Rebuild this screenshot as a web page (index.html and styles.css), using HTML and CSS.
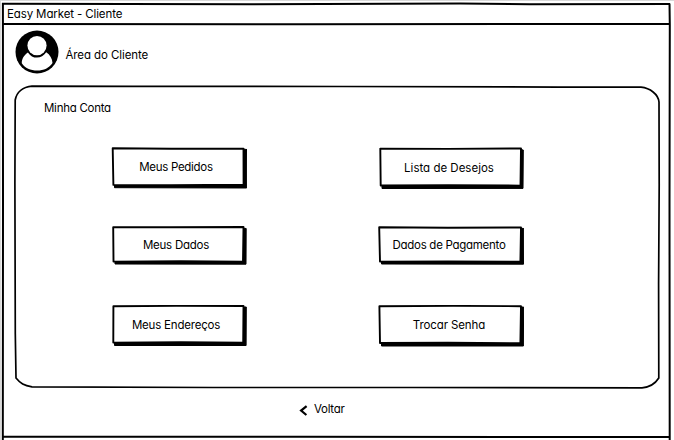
FILE: index.html
```html
<!DOCTYPE html>
<html lang="pt-BR">
<head>
<meta charset="utf-8">
<title>Easy Market - Cliente</title>
<link rel="stylesheet" href="styles.css">
</head>
<body>
<main class="window">
  <svg class="frame" viewBox="0 0 674 440" aria-hidden="true">
    <path class="edge" d="M0 .5H674M.5 0V440"/>
    <path class="line" d="M2 3.8L250 4.2L460 3.5L530 4.2L670 3.9M3 24L300 24.2L670 24"/>
    <path class="line" d="M2.9 3L3 200L2.8 440M669.5 3.5L669.8 25L669.5 200L669.7 440"/>
    <path class="line" d="M3 436.8L300 436.7L670 437.1"/>
  </svg>
  <header class="titlebar"><span class="t-title">Easy Market - Cliente</span></header>
  <div class="profile">
    <svg class="avatar" viewBox="0 0 44 44" aria-hidden="true">
      <circle cx="22" cy="22" r="21.5"/>
      <path class="white" d="M12.9 22.4C9 25 6.6 29 6.8 33.3C10 38.3 15.5 40.6 22.2 40.6C28.8 40.6 34.2 38.2 37.5 33.1C37.3 28.7 35 24.7 31.2 22.3C28.8 25.8 25.6 27.6 22 27.6C18.3 27.6 15.3 25.9 12.9 22.4Z"/>
      <circle class="white" cx="22" cy="15.6" r="9.6"/>
    </svg>
    <h1 class="t-area">Área do Cliente</h1>
  </div>
  <section class="panel">
    <svg class="outline" viewBox="0 0 648 306" aria-hidden="true">
      <path d="M19 2.1L120 2.4L330 2.5L545 3.1L628 3.2C637 4.2 645.2 10 646 18L646.2 100L645.6 200L645.8 294C642 300 637 303.2 629 303.8L400 303.5L200 303.5L19 302.8C11 301.6 7.5 299.5 3 294L2.3 250L1.9 100L2.2 16C3.6 8 10 2.9 19 2.1Z"/>
    </svg>
    <h2 class="t-conta">Minha Conta</h2>
    <nav class="menu">
      <a class="button" href="#">
        <svg viewBox="0 0 136 42" aria-hidden="true"><path class="shade" d="M130 2L136 2.5L135.6 41L3.5 40.7V36H130Z"/><path class="box" d="M1.7 1.2L60 1.8L132.5 1.6L132.6 37.6L60 38.2L2.4 37.9Z"/></svg>
        <span class="t-pedidos">Meus Pedidos</span></a>
      <a class="button wide" href="#">
        <svg viewBox="0 0 146 42" aria-hidden="true"><path class="shade" d="M140 2L145.3 3L145 41.4L4 41.5V36H140Z"/><path class="box" d="M2.3 1.6L70 1.9L143 1.5L142.5 38.6L70 38.3L2.7 38.5Z"/></svg>
        <span class="t-desejos">Lista de Desejos</span></a>
      <a class="button" href="#">
        <svg viewBox="0 0 136 42" aria-hidden="true"><path class="shade" d="M130 2L135.2 2.5L135 38.2L4 38V33H130Z"/><path class="box" d="M2.2 1.2L60 1.3L132.5 1L132 35.6L70 35.3L2.5 35.6Z"/></svg>
        <span class="t-dados">Meus Dados</span></a>
      <a class="button wide" href="#">
        <svg viewBox="0 0 146 42" aria-hidden="true"><path class="shade" d="M140 2L145.8 2.5L145.5 38.2L3.5 38V33H140Z"/><path class="box" d="M1.2 1.2L70 1.7L143 1.5L142.4 35.7L70 35.4L2 35.6Z"/></svg>
        <span class="t-pagamento">Dados de Pagamento</span></a>
      <a class="button" href="#">
        <svg viewBox="0 0 136 42" aria-hidden="true"><path class="shade" d="M130 2L135.3 2L135.1 40.5L3.5 40.5V35H130Z"/><path class="box" d="M2.4 1.2L65 .9L132.5 1L132.2 37.6L70 37.2L2.3 37.6Z"/></svg>
        <span class="t-enderecos">Meus Endereços</span></a>
      <a class="button wide" href="#">
        <svg viewBox="0 0 146 42" aria-hidden="true"><path class="shade" d="M140 2L145.6 2L145.4 41L3.5 41V35H140Z"/><path class="box" d="M1.4 1.3L75 .9L143 1.2L142.4 38.2L70 37.6L2 38Z"/></svg>
        <span class="t-senha">Trocar Senha</span></a>
    </nav>
  </section>
  <a class="back" href="#">
    <svg class="chevron" viewBox="0 0 9 12" aria-hidden="true"><path d="M7.6 1.2L2.1 5.6L7.4 10"/></svg>
    <span class="t-voltar">Voltar</span>
  </a>
</main>
</body>
</html>
```
FILE: styles.css
```css
* { box-sizing: border-box; }
body {
  margin: 0;
  background: #fff;
  color: #000;
  font-family: Inter, "Open Sans", sans-serif;
  font-feature-settings: "cv11" 1;
  font-size: 11.5px;
  line-height: 16px;
}
a { color: inherit; text-decoration: none; }
h1, h2 { margin: 0; font: inherit; font-feature-settings: "cv11" 1; }
span, h1, h2 { white-space: nowrap; }
.window { position: relative; width: 674px; height: 440px; overflow: hidden; }
.frame { position: absolute; inset: 0; width: 674px; height: 440px; }
.line { fill: none; stroke: #000; stroke-width: 2; }
.edge { fill: none; stroke: #d9d9d9; stroke-width: 1; }
.titlebar { height: 25px; padding: 6px 0 0 7px; }
.profile { display: flex; height: 59px; padding: 5px 0 0 15px; }
.avatar { width: 44px; height: 44px; margin: .3px 0 0 .4px; }
.white { fill: #fff; }
.profile h1 { margin: 17px 0 0 6px; }
.panel {
  position: relative;
  width: 648px;
  height: 306px;
  margin-left: 13px;
  padding: 16px 0 0 31px;
}
.outline { position: absolute; inset: 0; width: 648px; height: 306px; }
.outline path { fill: none; stroke: #000; stroke-width: 1.7; }
.menu {
  display: grid;
  grid-template-columns: 136px 146px;
  grid-template-rows: repeat(3, 42px);
  column-gap: 131px;
  row-gap: 37px;
  margin: 31px 0 0 67px;
}
.button { position: relative; display: flex; justify-content: center; padding: 12px 6px 0 0; }
.button svg { position: absolute; inset: 0; width: 100%; height: 100%; }
.button span { position: relative; }
.button .t-desejos { margin: 1px 0 0 2px; }
.button .t-dados, .button .t-pagamento { margin-top: -1px; }
.button .t-pagamento, .button .t-senha { margin-left: 2px; }
.t-title { letter-spacing: -.12px; }
.t-area { letter-spacing: -.08px; }
.t-conta { letter-spacing: -.27px; }
.t-pedidos { letter-spacing: -.3px; }
.t-dados { letter-spacing: -.25px; }
.t-enderecos { letter-spacing: -.2px; }
.t-pagamento { letter-spacing: -.28px; }
.t-senha { letter-spacing: -.12px; }
.t-voltar { letter-spacing: -.3px; }
.box { fill: #fff; stroke: #000; stroke-width: 1.9; stroke-linejoin: round; }
.shade { fill: #000; stroke: #000; stroke-width: 1; stroke-linejoin: round; }
.back { display: flex; align-items: flex-start; margin: 11px 0 0 299px; }
.chevron { width: 9px; height: 12px; margin: 4px 6px 0 0; }
.chevron path { fill: none; stroke: #000; stroke-width: 2.2; }
```
